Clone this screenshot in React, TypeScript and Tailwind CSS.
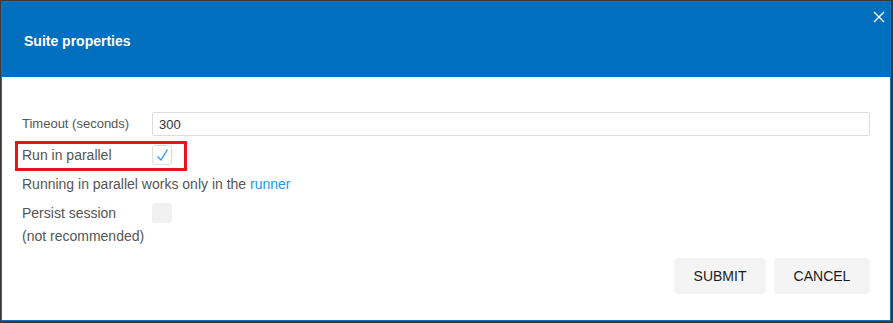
import React from "react";

const font = { fontFamily: '"Liberation Sans", Arial, sans-serif' };

export default function App() {
  return (
    <div className="w-[893px] h-[323px] bg-[#3a3a3a] pl-px pt-px overflow-hidden" style={font}>
      <div className="w-[890px] h-[320px] bg-white border border-[#1a6fb8] flex flex-col">
        {/* Header */}
        <div className="relative h-[75px] bg-[#006fbe] flex items-center pl-[22px] pt-[3px]">
          <h2 className="text-[14px] font-bold text-white">Suite properties</h2>
          <button className="absolute right-[4px] top-[8px] w-[14px] h-[14px] flex items-center justify-center">
            <svg width="12" height="12" viewBox="0 0 12 12">
              <path d="M1 1 L11 11 M11 1 L1 11" stroke="white" strokeWidth="1.4" />
            </svg>
          </button>
        </div>

        {/* Body */}
        <div className="flex flex-col pl-[20px] pr-[20px] pt-[35px] text-[14px] text-[#555]">
          <div className="flex items-center h-[24px]">
            <label className="w-[130px] text-[13px]">Timeout (seconds)</label>
            <input
              defaultValue="300"
              className="flex-1 h-[24px] border border-[#dcdcdc] rounded-[2px] px-[6px] text-[13px] text-[#333] outline-none"
            />
          </div>

          <div className="relative flex items-center h-[20px] mt-[9px]">
            <span className="absolute left-[-7px] top-[-4px] w-[172px] h-[30px] border-[3px] border-[#e8141c] pointer-events-none" />
            <label className="w-[130px]">Run in parallel</label>
            <span className="w-[20px] h-[20px] border border-[#dedede] rounded-[3px] flex items-center justify-center">
              <svg width="14" height="14" viewBox="0 0 14 14">
                <path d="M2.5 8.5 L6 12 L12.5 1.5" fill="none" stroke="#2196f3" strokeWidth="1.3" />
              </svg>
            </span>
          </div>

          <p className="mt-[10px] leading-[18px]">
            Running in parallel works only in the <a className="text-[#2196f3]">runner</a>
          </p>

          <div className="flex items-center h-[20px] mt-[10px]">
            <label className="w-[130px]">Persist session</label>
            <span className="w-[20px] h-[20px] bg-[#f1f1f1] rounded-[3px]" />
          </div>
          <p className="mt-[4px] leading-[18px]">(not recommended)</p>

          <div className="flex justify-end gap-[8px] mt-[13px]">
            <button className="w-[92px] h-[36px] bg-[#f4f4f4] rounded-[4px] text-[14px] text-[#1a1a1a]">
              SUBMIT
            </button>
            <button className="w-[96px] h-[36px] bg-[#f4f4f4] rounded-[4px] text-[14px] text-[#1a1a1a]">
              CANCEL
            </button>
          </div>
        </div>
      </div>
    </div>
  );
}
